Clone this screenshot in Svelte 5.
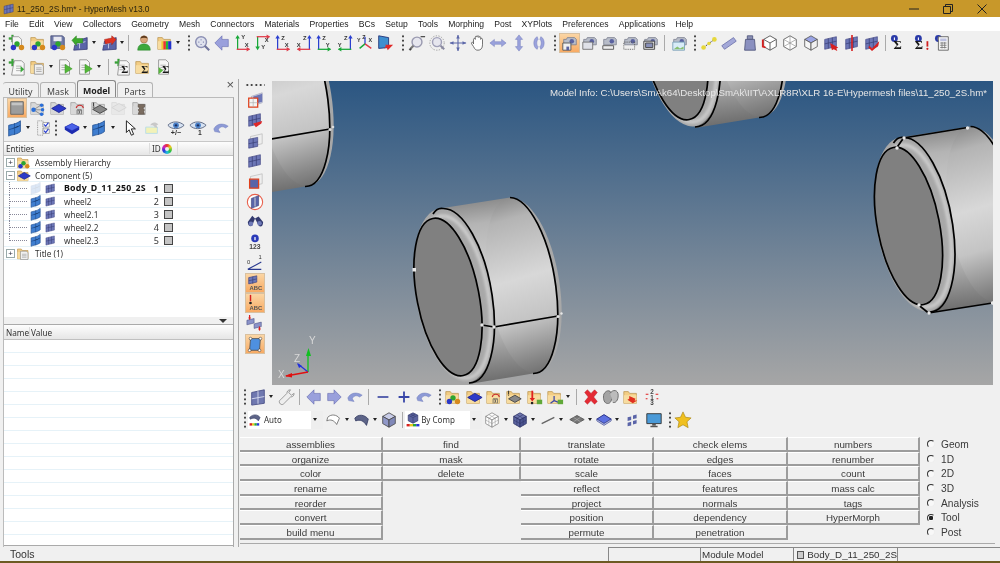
<script lang="ts">
  const menus = ["File","Edit","View","Collectors","Geometry","Mesh","Connectors","Materials","Properties","BCs","Setup","Tools","Morphing","Post","XYPlots","Preferences","Applications","Help"];

  // small drawing pieces the toolbar icons are composed from
  const folder = `<path d="M2 7V4h5l1.500 2H16v11H2z" fill="#f3cd84" stroke="#b8914c" stroke-width=".8"/><path d="M2 8h14v9H2z" fill="#f7dca0"/>`;
  const doc = `<path d="M4 2h8l3 3v13H4z" fill="#f6f6f6" stroke="#8a8a8a" stroke-width=".9"/><path d="M6 8h6M6 10.500h6M6 13h6" stroke="#9a9a9a" stroke-width=".8"/>`;
  const plus = `<path d="M1 4h3V1h2v3h3v2H6v3H4V6H1z" fill="#3aa83a" stroke="#1f7a1f" stroke-width=".3"/>`;
  const balls = `<circle cx="10" cy="11" r="3" fill="#2fa52f"/><circle cx="6" cy="15" r="3" fill="#2b38c8"/><circle cx="15" cy="15" r="3" fill="#d68a1e"/>`;
  const mesh = `<path d="M3 6l13-4v13L3 18z" fill="#5a64a8" stroke="#30346e" stroke-width=".8"/><path d="M9.500 4v12M3 12l13-3.500" stroke="#d8dcf0" stroke-width=".9"/>`;
  const meshFlat = `<path d="M3 6l13-3v11L3 17z" fill="#6c76b6" stroke="#3c4080" stroke-width=".7"/><path d="M7 5v11M11.500 4v11M3 11l13-3" stroke="#33386e" stroke-width=".7"/>`;
  const meshBlue = `<path d="M3 7c3-1 8-1 13-5v12c-5 4-10 3-13 5z" fill="#3f7ed0" stroke="#1f4e92" stroke-width=".9"/>`;
  const cam = `<path d="M3 9V6h3l1-2h8l2 2v6H3z" fill="#b7bcc8" stroke="#737888" stroke-width=".8"/><circle cx="12" cy="8" r="2.500" fill="#5a62a0"/>`;
  const sigma = (x = 5, y = 17, fs = 13) => `<text x="${x}" y="${y}" font-size="${fs}" font-weight="700" font-family="Liberation Serif,serif" fill="#161616">Σ</text>`;
  const info = `<circle cx="6" cy="5" r="3.800" fill="#2a3aa8"/><rect x="5.400" y="3.800" width="1.200" height="3" fill="#fff"/>`;
  const cube = (top, l, r, s = "#555") => `<path d="M10 2l7 4-7 4-7-4z" fill="${top}" stroke="${s}" stroke-width=".9"/><path d="M3 6l7 4v8l-7-4z" fill="${l}" stroke="${s}" stroke-width=".9"/><path d="M17 6l-7 4v8l7-4z" fill="${r}" stroke="${s}" stroke-width=".9"/>`;
  const flat = (c, s) => `<path d="M10 5l8 4.500-8 4.500-8-4.500z" fill="${c}" stroke="${s}"/>`;
  const arrow = (pts, c) => `<path d="${pts}" fill="${c}" stroke="#5a5fa8" stroke-width=".6"/>`;
  const undoArrow = `<path d="M2 11c3-6 10-7 16-3l-3 2c-3-2-6-2-8 2l2 3-6-1z" fill="#8d9ad6" stroke="#6a76b8" stroke-width=".5"/>`;

  function axes(v, vx, h, hy, cv, ch, a, ax, ay, b, bx, by) {
    const tip = v === "up" ? `M${vx-2.500} 5l2.500-4 2.500 4z` : `M${vx-2.500} 14l2.500 4 2.500-4z`;
    const vline = v === "up" ? `M${vx} 4V${hy}` : `M${vx} ${hy}V15`;
    const htip = h === "right" ? `M14 ${hy-2.500}l4 2.500-4 2.500z` : `M6 ${hy-2.500}l-4 2.500 4 2.500z`;
    return `<path d="${vline}" stroke="${cv}" stroke-width="1.400" fill="none"/><path d="${tip}" fill="${cv}"/><path d="M3 ${hy}H17" stroke="${ch}" stroke-width="1.400"/><path d="${htip}" fill="${ch}"/>
      <text x="${ax}" y="${ay}" font-size="6.500" font-weight="700" font-family="Liberation Sans" fill="#333">${a}</text><text x="${bx}" y="${by}" font-size="6.500" font-weight="700" font-family="Liberation Sans" fill="#333">${b}</text>`;
  }
  const G = "#18a838", R = "#e03c4a", B = "#2a3fd0";
  const grayFolder = folder.replace(/#f3cd84|#f7dca0/g, "#d8d8d8").replace("#b8914c", "#999");

  const icons = {
    modelOpen: plus + `<path d="M5 3h7l3 3v8H5z" fill="#f6f6f6" stroke="#888" stroke-width=".8"/>` + balls,
    folderBalls: folder + balls,
    saveBalls: `<path d="M2 2h13l2 2v12H2z" fill="#6f7aa8" stroke="#3e4470" stroke-width=".8"/><path d="M5 3h9v5H5z" fill="#e8e8f0"/>` + balls,
    importG: mesh.replace("M3 6", "M5 8") + `<path d="M1 7l5-5v3h7v5H6v3z" fill="#3ca82c" stroke="#237a18" stroke-width=".5"/>`,
    exportR: mesh.replace("M3 6", "M5 8") + `<path d="M18 6l-5-4v2.500L5 6l1 5 7-1.500V12z" fill="#dd3322" stroke="#a01c10" stroke-width=".5"/>`,
    user: `<circle cx="10" cy="6" r="4" fill="#d8a578" stroke="#8a5a30" stroke-width=".5"/><path d="M6 5c1-4 7-4 8 0-2-1-6-1-8 0z" fill="#5c3a1c"/><path d="M3 18c0-5 3-7 7-7s7 2 7 7z" fill="#3da83d" stroke="#1f7a1f" stroke-width=".5"/>`,
    folderColor: folder + `<path d="M8 8h3v9H8z" fill="#e33"/><path d="M11 8h2.500v9H11z" fill="#2b3"/><path d="M13.500 8H17v9h-3.500z" fill="#23c"/><path d="M6 8h2v9H6z" fill="#ec3"/>`,
    zoomWin: `<circle cx="9" cy="9" r="6" fill="#dfe2ee" stroke="#8c90b4" stroke-width="1.600"/><path d="M13 13l5 5" stroke="#70749c" stroke-width="2.400"/><path d="M6 9h1M9 6v1M9 11v1M11 9h1" stroke="#777ca8" stroke-width="1.500"/>`,
    arrL: arrow("M2 10l8-8v4h7v8h-7v4z", "#9aa0dc"),
    arrR: arrow("M18 10l-8-8v4H3v8h7v4z", "#9aa0dc"),
    axXY: axes("up", 4, "right", 17, G, R, "Y", 8, 6, "X", 12, 14),
    axYX: axes("down", 4, "right", 3, G, R, "X", 12, 9, "Y", 8, 17),
    axZX: axes("up", 4, "right", 17, B, R, "Z", 8, 7, "X", 12, 14),
    axXZ: axes("up", 16, "left", 17, B, R, "Z", 9, 7, "X", 2, 14),
    axZY: axes("up", 4, "right", 17, B, G, "Z", 8, 7, "Y", 12, 14),
    axYZ: axes("up", 16, "left", 17, B, G, "Z", 9, 7, "Y", 2, 14),
    iso: `<path d="M10 11V3" stroke="#2a3fd0" stroke-width="1.400"/><path d="M10 11l-6 5" stroke="#18a838" stroke-width="1.600"/><path d="M10 11l7 5" stroke="#e03c4a" stroke-width="1.600"/><text x="1" y="9" font-size="6" font-weight="700" font-family="Liberation Sans" fill="#333">Y</text><text x="7" y="6" font-size="6" font-weight="700" font-family="Liberation Sans" fill="#333">Z</text><text x="14" y="9" font-size="6" font-weight="700" font-family="Liberation Sans" fill="#333">X</text>`,
    viewRed: `<path d="M3 2l11 2v11L3 16z" fill="#3e8fd0" stroke="#26357a" stroke-width="1"/><path d="M19 12l-6 6-1-3-3 1 2-3-1-1z" fill="#e02828"/>`,
    zoomMinus: `<circle cx="10" cy="9" r="5.500" fill="#e6e6ee" stroke="#9a9ab0" stroke-width="1.600"/><path d="M6 13l-3 3" stroke="#777" stroke-width="2.400"/><path d="M14 3h5" stroke="#333" stroke-width="1.200"/><path d="M1 17h3M2.500 15.500v3" stroke="#333"/>`,
    zoomCircle: `<circle cx="10" cy="10" r="8" fill="none" stroke="#999" stroke-dasharray="1.500 1.500"/><circle cx="10" cy="9" r="5" fill="#e6e6ee" stroke="#a0a0b8" stroke-width="1.600"/><path d="M14 13l4 4" stroke="#8888a0" stroke-width="2.200"/>`,
    pan: `<path d="M10 1v18M1 10h18" stroke="#5b66a8" stroke-width="1.200"/><path d="M8 5l2-4 2 4zM8 15l2 4 2-4zM5 8l-4 2 4 2zM15 8l4 2-4 2z" fill="#5b66a8"/>`,
    hand: `<path d="M5 11V6c0-1.500 2-1.500 2 0V3.500c0-1.500 2-1.500 2 0V3c0-1.500 2-1.500 2 0v1c0-1.500 2-1.500 2 0v2c0-1.500 2-1.500 2 0v6c0 4-2 6-5 6-2.500 0-3.500-1-5-4l-2-3c-1-2 1-2.500 2-1z" fill="#fff" stroke="#555" stroke-width=".9"/>`,
    dblH: `<path d="M1 10l5-4v2.500h8V6l5 4-5 4v-2.500H6V14z" fill="#9aa2dc" stroke="#6c74b8" stroke-width=".5"/>`,
    dblV: `<path d="M10 1l4 5h-2.500v8H14l-4 5-4-5h2.500V6H6z" fill="#9aa2dc" stroke="#6c74b8" stroke-width=".5"/>`,
    rotB: `<path d="M8 3C3 5 3 15 8 17l1-3c-2-1-2-7 0-8zM12 3c5 2 5 12 0 14l-1-3c2-1 2-7 0-8z" fill="#9aa2dc" stroke="#6c74b8" stroke-width=".5"/>`,
    cam1: cam + `<path d="M2 10h9v8H2z" fill="#f0f0f0" stroke="#555"/><rect x="6" y="14" width="3" height="4" fill="#5a62a0"/>`,
    cam2: cam + `<path d="M2 9h11v8H2z" fill="#dfe1e8" stroke="#666" stroke-width=".9"/>`,
    cam3: cam + `<path d="M2 13h12v4H2z" fill="#eee" stroke="#555"/>`,
    cam4: cam + `<path d="M2 9h12v8H2z" fill="none" stroke="#555" stroke-dasharray="1 1"/>`,
    cam5: cam + `<path d="M2 8h12v9H2z" fill="#ddd" stroke="#444"/><path d="M4 10h8v5H4z" fill="#8890b8" stroke="#444"/>`,
    camPic: cam + `<path d="M2 9h13v9H2z" fill="#d8ecf8" stroke="#7aa0b8"/><path d="M3 17l4-3 3 2 4-2v3z" fill="#88c070"/>`,
    nodes: `<path d="M4 15L16 6" stroke="#333" stroke-dasharray="2 1"/><circle cx="4" cy="15" r="2.600" fill="#e6d83c"/><circle cx="16" cy="6" r="2.600" fill="#e6d83c"/><circle cx="10" cy="10.500" r="2" fill="#e6d83c"/>`,
    ruler: `<path d="M2 13L15 4l3 4L5 17z" fill="#a3a8d8" stroke="#7478b0"/>`,
    weight: `<path d="M7 2h6v4H7z" fill="#8a90b4" stroke="#555a80"/><path d="M5 6h10l1 12H4z" fill="#8a90c0" stroke="#555a80"/>`,
    boxRed: `<path d="M10 2l7 4v8l-7 4-7-4V6z" fill="#fff" stroke="#555"/><path d="M3 6l7 4 7-4M10 10v8" stroke="#555" fill="none"/><path d="M2 6v8l3 1" stroke="#d82020" stroke-width="2" fill="none"/>`,
    boxWire: `<path d="M10 2l7 4v8l-7 4-7-4V6z" fill="#fff" stroke="#666"/><path d="M3 6l7 4 7-4M10 10v8M3 14l7-4 7 4M10 2v8" stroke="#888" stroke-width=".7" fill="none"/>`,
    boxBlue: cube("#9aa4e4", "#f6f6f6", "#f0f0f0"),
    meshArrow: meshFlat + `<path d="M9 10l9 5-2 1 1 3-4-2-2 1z" fill="#d82020"/>`,
    meshRed: meshFlat + `<path d="M9 1h2v18H9z" fill="#d82020" opacity=".9"/>`,
    meshCheck: meshFlat + `<path d="M7 13l3 3 8-8-1 5-7 6-4-4z" fill="#d82020"/>`,
    sig1: info + sigma(5, 17, 14),
    sig2: info + sigma(2, 17, 14) + `<path d="M16 8v6" stroke="#d02020" stroke-width="2"/><circle cx="16" cy="16.500" r="1.200" fill="#d02020"/>`,
    calc: info + `<path d="M6 3h11v15H6z" fill="#f4f4f4" stroke="#555" stroke-width=".9"/><path d="M8 5h7v3H8z" fill="#bcc0e0"/><path d="M8 10h7M8 12.500h7M8 15h7M10 9v7M13 9v7" stroke="#777" stroke-width=".9"/>`,
    docPlus: plus + doc.replace("M4 2", "M7 3").replace("M6 8h6M6 10.500h6M6 13h6", "M9 9h6M9 11.500h6M9 14h6") + `<path d="M14 9l4 3.500-4 3.500z" fill="#3aa83a"/>`,
    folderDoc: folder + `<path d="M6 7h8l2 2v9H6z" fill="#f0f0f0" stroke="#888" stroke-width=".8"/><path d="M8 11h6M8 13h6M8 15h6" stroke="#999" stroke-width=".8"/>`,
    docArrow: doc + `<path d="M10 7l8 5-8 5z" fill="#55b83a" stroke="#2e8a1e" stroke-width=".5"/>`,
    plusSigma: plus + doc.replace("M4 2", "M6 3") + sigma(8, 17, 12),
    folderSigma: folder + sigma(8, 17, 12),
    docSigma: doc + `<path d="M4 10l5 4-5 4z" fill="#55b83a"/>` + sigma(8, 17, 12),
    square: `<path d="M3 3h14v14H3z" fill="#9c9c9c" stroke="#666"/><path d="M4 4h12v3H4z" fill="#c4c4c4"/>`,
    share: grayFolder + `<path d="M5 12l8-5M5 12l8 0M5 12l8 5" stroke="#666" stroke-width=".7"/><circle cx="5" cy="12" r="2.500" fill="#2b6fd8"/><circle cx="14" cy="7" r="2" fill="#2b6fd8"/><circle cx="15" cy="12" r="2" fill="#2b6fd8"/><circle cx="14" cy="17" r="2" fill="#2b6fd8"/>`,
    folderBlue: grayFolder + flat("#2d3ac8", "#1c2490").replace("M10 5", "M11 6"),
    folderRed: grayFolder + `<path d="M8 10c1-4 7-4 8 0" stroke="#c83030" fill="none" stroke-width="1.200"/><path d="M9 17v-5h5v5M10.500 12l2 5M12.500 12l-2 5" stroke="#555" fill="none" stroke-width=".8"/>`,
    folderGray: grayFolder + flat("#888", "#444").replace("M10 5", "M11 7") + `<path d="M4 4v4M3 9h2" stroke="#222" stroke-width="1"/>`,
    faded: `<g opacity=".3">` + grayFolder + flat("#ccc", "#999") + `</g>`,
    stack: grayFolder + `<path d="M8 6h7v3l-2 1 2 2-1 2 1 3H8l1-3-1-2 2-2-2-1z" fill="#7a6c60" stroke="#4c4238" stroke-width=".6"/>`,
    check: `<path d="M4 2h6v16H4z" fill="none" stroke="#8a8a8a" stroke-dasharray="1 1"/><path d="M10 4h7v5h-7zM10 11h7v5h-7z" fill="#fff" stroke="#8a8a8a" stroke-width=".8"/><path d="M11 6l2 2 3-4M11 13l2 2 3-4" stroke="#2a3fd0" fill="none" stroke-width="1.300"/>`,
    diamond: `<path d="M10 5l8 4v3l-8 5-8-5V9z" fill="#1d2bb0"/><path d="M10 5l8 4-8 4-8-4z" fill="#4a62e8" stroke="#1d2bb0" stroke-width=".6"/>`,
    meshBlue: meshBlue + `<path d="M9.500 4.500v13M3 12c4-1.500 9-2 13-5" stroke="#1f4e92" stroke-width=".8"/>`,
    cursor: `<path d="M6 2v13l3-3 2.500 6 2.500-1-2.500-6H16z" fill="#fff" stroke="#111" stroke-width="1"/>`,
    yellowDoc: `<path d="M3 9h13v7H3z" fill="#f2f2b8" stroke="#b8dce8"/><path d="M8 7c2-4 6-4 9-1l-2 1 1 3-4-1 1-1c-2-1-3-1-5-1z" fill="#c8c8c8"/>`,
    eyePlus: `<path d="M1 7c4-5 13-5 18 0-5 5-14 5-18 0z" fill="#d6e2f2" stroke="#55607c" stroke-width="1"/><circle cx="10" cy="7" r="3.200" fill="#4a80c8"/><circle cx="10" cy="7" r="1.300" fill="#1c2f60"/><text x="10" y="18" text-anchor="middle" font-size="8" font-weight="700" font-family="Liberation Sans" fill="#333">+/−</text>`,
    eyeOne: `<path d="M1 7c4-5 13-5 18 0-5 5-14 5-18 0z" fill="#d6e2f2" stroke="#55607c" stroke-width="1"/><circle cx="10" cy="7" r="3.200" fill="#4a80c8"/><circle cx="10" cy="7" r="1.300" fill="#1c2f60"/><text x="12" y="18" text-anchor="middle" font-size="7.500" font-weight="700" font-family="Liberation Sans" fill="#333">1</text>`,
    undo: undoArrow,
    vMeshSel: `<path d="M6 6l12-4v11l-12 4z" fill="#d8daea" stroke="#8a8ea8" stroke-width=".6"/><path d="M8 6l10-3v9L8 15z" fill="#6c76b6"/><path d="M3 8h10v10H3z" fill="#f4f4f4" stroke="#e0401c" stroke-width="1.400"/><path d="M3 13h10M8 8v10" stroke="#aaa" stroke-width=".7"/>`,
    vMeshRed: meshFlat + `<path d="M8 14l10-3-1 3-6 4z" fill="#e02828"/>`,
    vMeshGhost: `<path d="M5 5l13-3v11L5 16z" fill="#eee" stroke="#aaa" stroke-width=".6"/><path d="M3 8l10-2v10L3 18z" fill="#6c76b6" stroke="#3c4080" stroke-width=".7"/><path d="M8 7v10M3 13l10-2" stroke="#33386e" stroke-width=".7"/>`,
    vMesh: meshFlat,
    vMeshBox: `<path d="M5 5l13-3v11L5 16z" fill="#eee" stroke="#aaa" stroke-width=".6"/><path d="M4 8h10v10H4z" fill="#5a64a8" stroke="#e0401c" stroke-width="1.400"/>`,
    vMeshCircle: `<circle cx="10" cy="10" r="8.500" fill="#fff" stroke="#e8604c" stroke-width="1.200"/><path d="M6 6l8-3v11l-8 3z" fill="#5a64a8" stroke="#30346e" stroke-width=".6"/><path d="M10 5v10" stroke="#ddd"/>`,
    binoc: `<path d="M2 10l5-7 3 3-3 8c-2 2-5 0-5-4z" fill="#333a70"/><path d="M10 6l4-2 5 6c0 5-3 6-5 4z" fill="#333a70"/><circle cx="5.500" cy="12" r="2.500" fill="#6f7ab8"/><circle cx="15" cy="11.500" r="2.500" fill="#6f7ab8"/>`,
    info123: `<circle cx="10" cy="6" r="4.200" fill="#2a3ab8"/><rect x="9.300" y="4.500" width="1.400" height="3.500" fill="#fff"/><text x="10" y="18" text-anchor="middle" font-size="7.500" font-weight="700" font-family="Liberation Sans" fill="#444">123</text>`,
    scale: `<path d="M2 17L17 9M2 17h15" stroke="#2a3a90" stroke-width="1.300" fill="none"/><text x="1" y="11" font-size="6.500" font-family="Liberation Sans" fill="#333">0</text><text x="14" y="6" font-size="6.500" font-family="Liberation Sans" fill="#333">1</text>`,
    abcMesh: `<path d="M3 4l9-2v7l-9 2z" fill="#6c76b6" stroke="#3c4080" stroke-width=".7"/><path d="M7.500 3v8M3 7.500l9-2" stroke="#33386e" stroke-width=".6"/><text x="11" y="18" text-anchor="middle" font-size="6.500" font-weight="700" font-family="Liberation Sans" fill="#555">ABC</text>`,
    abcRed: `<path d="M5 1v7" stroke="#d82020" stroke-width="1.600"/><circle cx="5" cy="10" r="1.500" fill="#222"/><text x="11" y="18" text-anchor="middle" font-size="6.500" font-weight="700" font-family="Liberation Sans" fill="#555">ABC</text>`,
    swap: `<path d="M1 7l8-2v5l-8 2zM9 11l8-2v5l-8 2z" fill="#8a92c8" stroke="#444a80" stroke-width=".6"/><path d="M4 1v4M15 14v4" stroke="#d82020" stroke-width="1.400"/><path d="M2.500 4L4 7l1.500-3zM13.500 16l1.500 3 1.500-3z" fill="#d82020"/>`,
    shellBlue: `<path d="M5 4h11l-1 13H4z" fill="#4e90e0" stroke="#444" stroke-width=".8"/><circle cx="5" cy="4" r="1.500" fill="#fff" stroke="#333" stroke-width=".6"/><circle cx="16" cy="4" r="1.500" fill="#fff" stroke="#333" stroke-width=".6"/><circle cx="4" cy="17" r="1.500" fill="#fff" stroke="#333" stroke-width=".6"/><circle cx="15" cy="17" r="1.500" fill="#fff" stroke="#333" stroke-width=".6"/>`,
    window: `<path d="M3 5l14-3v15L3 19z" fill="#6f78b0" stroke="#4a5088"/><path d="M10 3.500v14M3 12l14-2.500" stroke="#d8dcf0"/>`,
    wrench: `<path d="M15 2c-3 0-4 2-4 4l-7 7c-2 1-2 3 0 5 2 1 3 0 4-1l7-7c3 0 4-2 4-4l-3 2-3-3z" fill="#eee" stroke="#888" stroke-width=".9"/>`,
    minus: `<path d="M4 9h12v2H4z" fill="#4a55a8"/>`,
    plusB: `<path d="M4 9h5V4h2v5h5v2h-5v5H9v-5H4z" fill="#3846a8"/>`,
    folBlue: folder + flat("#2d3ac8", "#1c2490").replace("M10 5", "M11 6"),
    folRed: folder + `<path d="M8 10c1-4 7-4 8 0" stroke="#c83030" fill="none" stroke-width="1.200"/><path d="M9 17v-5h5v5M10.500 12l2 5M12.500 12l-2 5" stroke="#555" fill="none" stroke-width=".8"/>`,
    folGray: folder + `<path d="M11 8l7 4-7 4-7-4z" fill="#888" stroke="#444"/><path d="M4 3v4M3.500 8h1" stroke="#222"/>`,
    folDown: folder + `<path d="M7 3v9" stroke="#e02020" stroke-width="2"/><path d="M4 11l3 4 3-4z" fill="#e02020"/><rect x="5.500" y="15.500" width="2.500" height="2.500" fill="#222"/><rect x="12" y="13" width="6" height="5" fill="#60a838"/>`,
    folTriad: folder + `<path d="M9 9v5l-4 3M9 14l5 2" stroke="#3c48a8" stroke-width="1.400" fill="none"/><rect x="13" y="13" width="6" height="5" fill="#60a838"/>`,
    redX: `<path d="M3 5l3-3 4 4 4-4 3 3-4 5 4 5-3 3-4-4-4 4-3-3 4-5z" fill="#e42a34" stroke="#b01820" stroke-width=".5"/>`,
    stackG: `<path d="M2 7c3-6 9-5 9 2s-3 9-6 8-4-6-3-10z" fill="#a4a4a4" stroke="#666"/><path d="M9 6c3-5 9-4 9 2s-3 9-6 8" fill="#bcbcbc" stroke="#666"/>`,
    folArrow: folder + `<path d="M8 9l7 3-1 2 3 0-5 3-6-4 2-1z" fill="#e03020"/>`,
    num: `<text x="10" y="7" text-anchor="middle" font-size="7" font-weight="700" font-family="Liberation Sans" fill="#444">2</text><text x="10" y="13" text-anchor="middle" font-size="7" font-weight="700" font-family="Liberation Sans" fill="#444">1</text><text x="10" y="19" text-anchor="middle" font-size="7" font-weight="700" font-family="Liberation Sans" fill="#444">3</text><path d="M3 7h3M14 7h3M3 12h2M15 12h2" stroke="#e02020" stroke-width="1.200"/>`,
    shellOpen: `<path d="M3 7c4-4 10-3 13 1l-3 7C10 10 6 9 2 11z" fill="#fff" stroke="#666" stroke-width=".9"/>`,
    shellDark: `<path d="M2 8c4-5 11-4 15 1l-2 7c-3-5-7-7-12-5z" fill="#5d6488" stroke="#333a60" stroke-width=".9"/>`,
    cubeB: cube("#c8cce8", "#9098c8", "#8088b8", "#444"),
    cubeWire: cube("#fff", "#fff", "#fff", "#888") + `<path d="M6.500 4l7 4v8M13.500 4l-7 4v8M3 10l7 4 7-4" stroke="#999" stroke-width=".6" fill="none"/>`,
    cubeSolid: cube("#7078b0", "#5c64a0", "#4c5490", "#2e3468") + `<path d="M6.500 4l7 4v8M13.500 4l-7 4v8M3 10l7 4 7-4" stroke="#2e3468" stroke-width=".6" fill="none"/>`,
    line: `<path d="M3 14L17 7" stroke="#666" stroke-width="1.600"/>`,
    flatG: flat("#777", "#555") + `<path d="M6 7l8 5M14 7l-8 5" stroke="#bbb" stroke-width=".6"/>`,
    flatB: `<path d="M10 4l8 5-8 5-8-5z" fill="#5c70e0" stroke="#222a80"/><path d="M2 9v2l8 5 8-5V9l-8 5z" fill="#b9c0e4" stroke="#222a80" stroke-width=".6"/>`,
    fourSq: `<path d="M4 7l4-1v4l-4 1zM10 5l4-1v4l-4 1zM4 13l4-1v4l-4 1zM10 11l4-1v4l-4 1z" fill="#5a64a8"/>`,
    monitor: `<path d="M2 3h16v11H2z" fill="#4a9ad8" stroke="#333" stroke-width="1"/><path d="M8 14h4v2H8zM6 16.500h8v1.500H6z" fill="#555"/>`,
    star: `<path d="M10 1l2.800 6 6.200.7-4.600 4.300 1.300 6.500-5.700-3.200-5.700 3.200L5.600 12 1 7.700 7.200 7z" fill="#f0c020" stroke="#a88510" stroke-width=".7"/>`,
    comboShell: `<path d="M2 7c4-5 11-4 13 0l-2 4C10 7 6 7 3 9z" fill="#5d6488" stroke="#333a60" stroke-width=".8"/><rect x="2" y="14" width="3" height="3" fill="#d82020"/><rect x="5" y="14" width="3" height="3" fill="#e8c820"/><rect x="8" y="14" width="3" height="3" fill="#28a838"/><rect x="11" y="14" width="3" height="3" fill="#2838d8"/>`,
    comboCube: `<path d="M10 1l6 3v7l-6 3-6-3V4z" fill="#5c64a0" stroke="#2e3468" stroke-width=".8"/><path d="M4 4l6 3 6-3M10 7v7M7 2.500l6 3M13 2.500l-6 3" stroke="#2e3468" stroke-width=".6" fill="none"/><rect x="2" y="15" width="4" height="3" fill="#d82020"/><rect x="6" y="15" width="4" height="3" fill="#e8c820"/><rect x="10" y="15" width="4" height="3" fill="#28a838"/><rect x="14" y="15" width="4" height="3" fill="#2838d8"/>`
  };

  // toolbar layouts: names are icons, "!" marks a pressed one, numbers are extra space in px
  const row1 = [1,"grip","modelOpen","folderBalls","saveBalls",2,"importG","dd",1,"exportR","dd","sep",2,"user","folderColor","dd",4,"grip","zoomWin","arrL","axXY","axYX","axZX","axXZ","axZY","axYZ","iso","viewRed",4,"grip",1,"zoomMinus","zoomCircle","pan","hand","dblH","dblV","rotB",3,"grip",1,"!cam1","cam2","cam3","cam4","cam5","sep",2,"camPic",2,"grip",1,"nodes","ruler","weight","boxRed","boxWire","boxBlue","meshArrow","meshRed","meshCheck","sep","sig1",3,"sig2","calc"];
  const row2 = [1,"grip","docPlus","folderDoc","dd","docArrow","docArrow","dd",3,"sep",1,"plusSigma","folderSigma","docSigma"];
  const leftRow1 = [3,"!square","share","folderBlue","folderRed","folderGray","faded","stack"];
  const leftRow2 = [1,"meshBlue","dd","check","grip",3,"diamond","dd","meshBlue","dd",3,"cursor",2,"yellowDoc",3,"eyePlus",2,"eyeOne",3,"undo"];
  const vertical = ["vMeshSel","vMeshRed","vMeshGhost","vMesh","vMeshBox","vMeshCircle","binoc","info123","scale","!abcMesh","!abcRed","swap","!shellBlue"];
  const bottom1 = [2,"grip","window","dd","wrench",1,"sep",1,"arrL","arrR","undo",1,"sep",1,"minus","plusB","undo",3,"grip","folderBalls","folBlue","folRed","folGray","folDown","folTriad","dd",1,"sep",1,"redX","stackG","folArrow","num"];
  const bottom2a = [1,"shellOpen","dd","shellDark","dd","cubeB","sep"];
  const bottom2b = ["cubeWire","dd","cubeSolid","dd",1,"line","dd",1,"flatG","dd","flatB","dd",2,"fourSq","monitor",3,"grip","star"];

  const tree = [
    { kind: "root", sign: "+", icon: "folderBalls", name: "Assembly Hierarchy" },
    { kind: "root", sign: "−", icon: "folBlue", name: "Component (5)" },
    { kind: "leaf", name: "Body_D_11_250_2S", id: 1, bold: true, ghost: true },
    { kind: "leaf", name: "wheel2", id: 2 },
    { kind: "leaf", name: "wheel2.1", id: 3 },
    { kind: "leaf", name: "wheel2.2", id: 4 },
    { kind: "leaf", name: "wheel2.3", id: 5, last: true },
    { kind: "root", sign: "+", icon: "folderDoc", name: "Title (1)" }
  ];

  const columns = [
    ["assemblies","organize","color","rename","reorder","convert","build menu"],
    ["find","mask","delete"],
    ["translate","rotate","scale","reflect","project","position","permute"],
    ["check elems","edges","faces","features","normals","dependency","penetration"],
    ["numbers","renumber","count","mass calc","tags","HyperMorph"]
  ];
  const radios = ["Geom","1D","2D","3D","Analysis","Tool","Post"];
</script>

{#snippet bar(items)}
  {#each items as it}
    {#if typeof it === "number"}
      <span class="gap" style="width:{it}px"></span>
    {:else if it === "grip"}
      <span class="grip"></span>
    {:else if it === "sep"}
      <span class="sep"></span>
    {:else if it === "dd"}
      <span class="dd"></span>
    {:else}
      {@render icon(it)}
    {/if}
  {/each}
{/snippet}

{#snippet icon(it)}
  <span class="tb" class:on={it[0] === "!"}>
    <svg viewBox="0 0 20 20" width="18" height="18">{@html icons[it.replace("!", "")]}</svg>
  </span>
{/snippet}

<div class="app">
  <header class="title">
    <svg viewBox="0 0 20 20" width="14" height="14">{@html icons.vMesh}</svg>
    <span class="title-text">11_250_2S.hm* - HyperMesh v13.0</span>
    <span class="winbtns">
      <svg width="12" height="12" viewBox="0 0 12 12"><path d="M1 6h10" stroke="#222"/></svg>
      <svg width="12" height="12" viewBox="0 0 12 12"><path d="M1.500 3.500h7v7h-7zM3.500 3.500v-2h7v7h-2" fill="none" stroke="#222"/></svg>
      <svg width="12" height="12" viewBox="0 0 12 12"><path d="M1.500 1.500l9 9M10.500 1.500l-9 9" stroke="#222"/></svg>
    </span>
  </header>

  <nav class="menu">
    {#each menus as m}<span>{m}</span>{/each}
  </nav>

  <div class="row top">{@render bar(row1)}</div>
  <div class="row top">{@render bar(row2)}</div>

  <div class="main">
    <aside class="left">
      <div class="tabs">
        <span class="tab">Utility</span>
        <span class="tab">Mask</span>
        <span class="tab active">Model</span>
        <span class="tab">Parts</span>
        <span class="close">×</span>
      </div>
      <div class="panel">
        <div class="row lr1">{@render bar(leftRow1)}</div>
        <div class="row lr2">{@render bar(leftRow2)}</div>
        <div class="thead first">
          <span class="th-name">Entities</span>
          <span class="th-id">ID</span>
          <span class="th-wheel"><span class="wheel"></span></span>
        </div>
        <div class="tree">
          {#each tree as n}
            <div class="tr">
              {#if n.kind === "root"}
                <span class="sign">{n.sign}</span>
                <svg class="ti" viewBox="0 0 20 20" width="15" height="15">{@html icons[n.icon]}</svg>
                <span class="tname root">{n.name}</span>
              {:else}
                <span class="branch" class:last={n.last}></span>
                <svg class="ti" class:ghost={n.ghost} viewBox="0 0 20 20" width="14" height="14">{@html icons.meshBlue}</svg>
                <svg class="ti" viewBox="0 0 20 20" width="13" height="13">{@html icons.vMesh}</svg>
                <span class="tname" class:bold={n.bold}>{n.name}</span>
                <span class="tid" class:bold={n.bold}>{n.id}</span>
                <span class="swatch"></span>
              {/if}
            </div>
          {/each}
          <div class="fill"></div>
        </div>
        <div class="split"><span class="tri"></span></div>
        <div class="thead second">
          <span class="th-n">Name</span>
          <span>Value</span>
        </div>
        <div class="values"></div>
      </div>
    </aside>

    <section class="right">
      <div class="view-row">
        <div class="vbar">
          <span class="hgrip"></span>
          {#each vertical as v}{@render icon(v)}{/each}
        </div>
        <div class="canvas">
          <svg viewBox="272 81 721 304" width="721" height="304">
            <defs>
              <linearGradient id="bg" x1="0" y1="0" x2="0" y2="1">
                <stop offset="0" stop-color="#2b5682"/>
                <stop offset="1" stop-color="#a6a6a6"/>
              </linearGradient>
              <linearGradient id="body" gradientUnits="userSpaceOnUse" x1="505" y1="198" x2="528" y2="378">
                <stop offset="0" stop-color="#8c8c8c"/>
                <stop offset=".12" stop-color="#b4b4b4"/>
                <stop offset=".45" stop-color="#d8d8d8"/>
                <stop offset=".68" stop-color="#c4c4c4"/>
                <stop offset=".9" stop-color="#868686"/>
                <stop offset="1" stop-color="#6c6c6c"/>
              </linearGradient>
              <filter id="soft" x="-30%" y="-30%" width="160%" height="160%"><feGaussianBlur stdDeviation="1.500"/></filter>
              <g id="wheel">
                <ellipse cx="524" cy="285.500" rx="35.500" ry="88" transform="rotate(-9 524 285.500)" fill="#a8a8a8"/>
                <path d="M443 208 L510 197.500 A33.500 88 -9 0 1 533 373.500 L469 384 Z" fill="url(#body)"/>
                <ellipse cx="521.500" cy="285.500" rx="33.500" ry="88" transform="rotate(-9 521.500 285.500)" fill="url(#body)"/>
                <ellipse cx="454" cy="295.500" rx="38" ry="88" transform="rotate(-10 454 295.500)" fill="#a8a8a8"/>
                <ellipse cx="454.500" cy="297" rx="34" ry="82" transform="rotate(-10 454.500 297)" fill="none" stroke="#e0e0e0" stroke-width="3" opacity=".8" filter="url(#soft)"/>
                <path d="M433 214 C436 209 440 208 443 208.500 A35.600 88 -10 0 1 469 383" fill="none" stroke="#000" stroke-width="1.700"/>
                <path d="M510 197.500 A33.500 88 -9 0 1 533 373.500" fill="none" stroke="#000" stroke-width="1.700"/>
                <ellipse cx="448" cy="297" rx="31" ry="80" transform="rotate(-11 448 297)" fill="#808080" stroke="#000" stroke-width="1.700"/>
              </g>
            </defs>
            <rect x="272" y="81" width="721" height="304" fill="url(#bg)"/>

            <g transform="translate(-228 -187)">
              <use href="#wheel"/>
              <path d="M494 327L558 316" stroke="#000" stroke-width="1.700"/>
              <circle cx="558" cy="316.500" r="1.500" fill="#ddd"/><circle cx="561" cy="314" r="1.300" fill="#ddd"/>
            </g>
            <g transform="translate(226 -256)">
              <use href="#wheel"/>
            </g>
            <use href="#wheel"/>
            <path d="M482 325L494 327L558 316" fill="none" stroke="#000" stroke-width="1.700"/>
            <g fill="#e8e8e8">
              <rect x="412.500" y="268" width="3.500" height="3.500"/>
              <circle cx="482" cy="325" r="1.700"/><circle cx="494" cy="327" r="1.700"/><circle cx="558" cy="316.500" r="1.500"/><circle cx="561.500" cy="313.500" r="1.200"/>
            </g>

            <g transform="translate(460.500 -71)">
              <use href="#wheel"/>
              <path d="M436 219L443 209L507 198.500M468 384L532 374" fill="none" stroke="#000" stroke-width="1.700"/>
              <path d="M458 376L468 384" stroke="#000" stroke-width="1.700"/>
              <g fill="#e8e8e8">
                <circle cx="436.500" cy="219" r="1.700"/><circle cx="443.500" cy="209" r="1.700"/><circle cx="507" cy="199" r="1.700"/><circle cx="458.500" cy="376" r="1.700"/><circle cx="468.500" cy="384" r="1.700"/><circle cx="532" cy="374" r="1.700"/>
              </g>
            </g>

            <text class="model-info" x="550" y="96">Model Info: C:\Users\SmAk64\Desktop\SmAk\IIT\AXLR8R\XLR 16-E\Hypermesh files\11_250_2S.hm*</text>

            <path d="M308 372V353" stroke="#10c020" stroke-width="1.300"/><path d="M306 356l2.500-8 2.500 8z" fill="#10c020"/>
            <path d="M308 372L298 364" stroke="#2030e0" stroke-width="1.300"/><path d="M302 366l-5-3 2 5z" fill="#2030e0"/>
            <path d="M308 372L286 376" stroke="#e01010" stroke-width="1.300"/><path d="M292 373l-7 3 7 1.500z" fill="#e01010"/>
            <text class="triad" x="309" y="344">Y</text>
            <text class="triad" x="294" y="362">Z</text>
            <text class="triad" x="278" y="378">X</text>
          </svg>
        </div>
      </div>

      <div class="row low">{@render bar(bottom1)}</div>
      <div class="row low">
        <span class="gap" style="width:2px"></span>
        <span class="grip"></span>
        <span class="combo one">
          <svg viewBox="0 0 20 20" width="16" height="16">{@html icons.comboShell}</svg>
          <span class="ctext">Auto</span>
          <span class="dd solid"></span>
        </span>
        {@render bar(bottom2a)}
        <span class="combo two">
          <svg viewBox="0 0 20 20" width="16" height="16">{@html icons.comboCube}</svg>
          <span class="ctext">By Comp</span>
          <span class="dd solid"></span>
        </span>
        {@render bar(bottom2b)}
      </div>

      <div class="pages">
        <div class="btngrid">
          {#each columns as col}
            <div class="col">
              {#each col as label}<span class="btn">{label}</span>{/each}
            </div>
          {/each}
        </div>
        <div class="radios">
          {#each radios as r}
            <label class="radio"><span class="dot" class:checked={r === "Tool"}></span>{r}</label>
          {/each}
        </div>
      </div>
    </section>
  </div>

  <footer class="status">
    <span class="s-tools">Tools</span>
    <span class="cell c1"></span>
    <span class="cell c2">Module Model</span>
    <span class="cell c3"><span class="mini"></span>Body_D_11_250_2S</span>
    <span class="cell c4"></span>
  </footer>
</div>

<style>
  :global(body) { margin: 0; background: #f0f0f0; }
  .app {
    width: 1000px;
    height: 563px;
    overflow: hidden;
    display: flex;
    flex-direction: column;
    background: #f0f0f0;
    color: #2a2a2a;
    font-family: "Liberation Sans", Arial, sans-serif;
    filter: blur(0.35px);
  }
  .title {
    height: 17px;
    flex: none;
    background: #c8982a;
    display: flex;
    align-items: center;
    padding-left: 2px;
    font: 8.400px "Liberation Sans", sans-serif;
    color: #2b2410;
  }
  .title-text { margin-left: 1px; }
  .winbtns { margin-left: auto; display: flex; gap: 22px; padding-right: 12px; }
  .menu {
    height: 14px;
    flex: none;
    background: #fff;
    display: flex;
    gap: 10.200px;
    align-items: center;
    padding-left: 5px;
    font: 8.600px "Liberation Sans", sans-serif;
    color: #222;
  }
  .row { display: flex; align-items: center; flex: none; }
  .top { height: 24px; }
  .tb { width: 20.400px; height: 20px; flex: none; display: flex; align-items: center; justify-content: center; }
  .tb.on { background: linear-gradient(#fbd8a8, #f8a860); outline: 1px solid #d8c0a0; outline-offset: -1px; }
  .gap { flex: none; }
  .grip {
    width: 6px; height: 18px; flex: none;
    background: radial-gradient(circle at 50% 50%, #222 0.9px, transparent 1.1px) 0 0 / 6px 4.500px repeat-y;
  }
  .sep { width: 6px; height: 16px; flex: none; background: linear-gradient(#aaa, #aaa) center / 1px 100% no-repeat; }
  .dd { width: 7px; height: 8px; flex: none; position: relative; }
  .dd::after {
    content: ""; position: absolute; left: 1px; top: 2px;
    border: 2.500px solid transparent; border-top: 3px solid #222; border-bottom: 0;
  }
  .main { flex: 1; min-height: 0; display: flex; }
  .left {
    width: 238px; flex: none;
    padding: 0 4px 0 3px; box-sizing: border-box;
    display: flex; flex-direction: column;
    font-family: "Noto Sans", "Liberation Sans", sans-serif;
    font-size: 8.200px;
  }
  .tabs { height: 15px; margin-top: 3px; display: flex; align-items: flex-end; flex: none; font-size: 8.800px; }
  .tab {
    width: 36px; height: 15px; box-sizing: border-box; text-align: center; line-height: 18px;
    border: 1px solid #b4b4b4; border-bottom: 0; border-radius: 3px 3px 0 0; color: #444; margin-right: 1px;
    background: #f0f0f0;
  }
  .tab:first-child { border-left: 0; }
  .tab.active { width: 39px; height: 17px; font-weight: 700; color: #222; border-color: #888; line-height: 21px; }
  .close { margin-left: auto; align-self: flex-start; margin-top: -5px; margin-right: 0; font: 13px "Liberation Sans"; color: #555; }
  .panel {
    flex: 1; min-height: 0;
    display: flex; flex-direction: column;
    border-left: 1px solid #bbb;
    border-right: 1px solid #aaa;
    border-top: 1px solid #bbb;
    padding-bottom: 1px;
  }
  .lr1 { height: 19px; }
  .lr2 { height: 21px; }
  .thead {
    height: 15px; flex: none;
    display: flex; align-items: center; box-sizing: border-box;
    background: linear-gradient(#fdfdfd, #e6e6e6);
    border-top: 1px solid #c8c8c8;
    border-bottom: 1px solid #c0c0c0;
    color: #333;
  }
  .first { margin-top: 3px; }
  .th-name { width: 146px; padding-left: 2px; box-sizing: border-box; border-right: 1px solid #ddd; }
  .th-id { width: 12px; padding-left: 2px; box-sizing: border-box; }
  .th-wheel { width: 15px; border-right: 1px solid #ddd; height: 13px; display: flex; align-items: center; }
  .wheel {
    width: 10px; height: 10px; border-radius: 50%;
    background: conic-gradient(#e83030, #e8d020, #28c040, #20c0e0, #2838d8, #d020c0, #e83030);
    position: relative;
  }
  .wheel::after { content: ""; position: absolute; inset: 3px; border-radius: 50%; background: #eee; }
  .tree {
    height: 161px; flex: none; background: #fff; display: flex; flex-direction: column;
  }
  .tr {
    height: 13px; flex: none; box-sizing: border-box;
    display: flex; align-items: center;
    border-bottom: 1px solid #e6f2f8;
    color: #333;
  }
  .fill { flex: 1; }
  .sign {
    width: 7px; height: 7px; margin-left: 2px; flex: none;
    border: 1px solid #9aa; font: 8px/7px "Liberation Sans"; text-align: center; color: #334;
  }
  .ti { flex: none; margin-left: 1px; }
  .ti.ghost { opacity: 0.18; }
  .tname { margin-left: 7px; width: 85px; flex: none; white-space: nowrap; }
  .tname.root { width: auto; margin-left: 4px; }
  .tname.bold { font-weight: 700; color: #111; font-size: 8.800px; letter-spacing: 0.25px; }
  .tid.bold { font-weight: 700; color: #111; }
  .branch {
    width: 19px; margin-left: 5px; height: 13px; flex: none; box-sizing: border-box;
    border-left: 1px dotted #889;
    background: linear-gradient(to right, #889 50%, transparent 50%) 0 6px / 2px 1px repeat-x;
  }
  .branch.last { height: 7px; align-self: flex-start; }
  .tid { width: 10px; flex: none; text-align: right; font-size: 9px; }
  .swatch { width: 7px; height: 7px; margin-left: 5px; flex: none; border: 1px solid #444; background: #c4c4c4; }
  .split { height: 7px; flex: none; display: flex; justify-content: flex-end; align-items: center; padding-right: 6px; }
  .tri { border: 4px solid transparent; border-top: 4px solid #333; border-bottom: 0; }
  .second { height: 16px; border-top: 1px solid #aaa; }
  .th-n { width: 26px; padding-left: 2px; box-sizing: border-box; border-right: 1px solid #ddd; margin-right: 1px; }
  .values {
    flex: 1; min-height: 0;
    border-bottom: 1px solid #aaa;
    background: repeating-linear-gradient(#fff 0 12px, #e6f2f8 12px 13px);
  }
  .right { flex: 1; min-width: 0; padding-left: 1px; display: flex; flex-direction: column; border-left: 1px solid #a8a8a8; box-sizing: border-box; }
  .view-row { display: flex; height: 304px; margin-top: 2px; flex: none; }
  .vbar { width: 32px; flex: none; display: flex; flex-direction: column; align-items: center; padding-right: 2px; box-sizing: border-box; }
  .vbar .tb { height: 20.300px; }
  .hgrip {
    width: 20px; height: 8px; flex: none; margin-bottom: 1px;
    background: radial-gradient(circle at 50% 50%, #222 0.9px, transparent 1.1px) 0 0 / 4.500px 8px repeat-x;
  }
  .canvas { width: 721px; height: 304px; flex: none; }
  .canvas svg { display: block; }
  .model-info { font: 9.700px "Liberation Sans", sans-serif; fill: #e6e6e6; }
  .triad { font: 10px "Liberation Sans", sans-serif; fill: #d8d8d8; }
  .low { height: 23px; }
  .low:last-of-type { height: 24px; }
  .combo {
    height: 18px; flex: none; box-sizing: border-box;
    background: #fff; display: flex; align-items: center;
    font: 8px "Noto Sans", "Liberation Sans", sans-serif; color: #333;
  }
  .combo.one { width: 75px; }
  .combo.two { width: 77px; }
  .ctext { flex: 1; margin-left: 0; }
  .dd.solid { background: #eee; height: 18px; width: 12px; }
  .dd.solid::after { left: 2px; top: 7px; }
  .pages {
    margin-top: 6px;
    height: 106px; flex: none;
    display: flex;
    border-bottom: 1px solid #aaa;
    margin-right: 5px;
  }
  .btngrid { display: grid; grid-template-columns: 143px 138px 133px 134px 132px; }
  .col { display: flex; flex-direction: column; }
  .btn {
    height: 14.700px; box-sizing: border-box; flex: none;
    text-align: center; line-height: 13px;
    font-size: 9.800px; color: #3a3a3a;
    background: #f0f0f0;
    border-top: 1px solid #fff;
    border-right: 2px solid #9c9c9c;
    border-bottom: 2px solid #9c9c9c;
  }
  .radios { display: flex; flex-direction: column; padding-left: 7px; }
  .radio { height: 14.700px; display: flex; align-items: center; font-size: 10.200px; color: #3a3a3a; }
  .dot {
    width: 6px; height: 6px; margin-right: 6px; border-radius: 50%;
    border: 1px solid #eee; border-top-color: #333; border-left-color: #333;
    background: #f8f8f8;
  }
  .dot.checked { background: radial-gradient(circle, #222 0 2px, #f8f8f8 2.400px); }
  .status {
    height: 16px; flex: none; display: flex; align-items: stretch;
    border-bottom: 2px solid #6d5a22; box-sizing: border-box;
    font-size: 10px; color: #333;
    font-family: "Liberation Sans", sans-serif;
  }
  .s-tools { width: 608px; flex: none; padding-left: 10px; font-size: 10.500px; line-height: 15px; box-sizing: border-box; }
  .cell {
    flex: none; box-sizing: border-box; border-top: 1px solid #888; border-left: 1px solid #888;
    display: flex; align-items: center; white-space: nowrap; padding-left: 1px; font-size: 9.800px;
  }
  .c1 { width: 92px; }
  .c2 { width: 93px; }
  .c3 { width: 104px; }
  .c4 { flex: 1; }
  .mini { width: 6px; height: 6px; border: 1px solid #555; background: #ccc; margin: 0 3px 0 2px; }
</style>
